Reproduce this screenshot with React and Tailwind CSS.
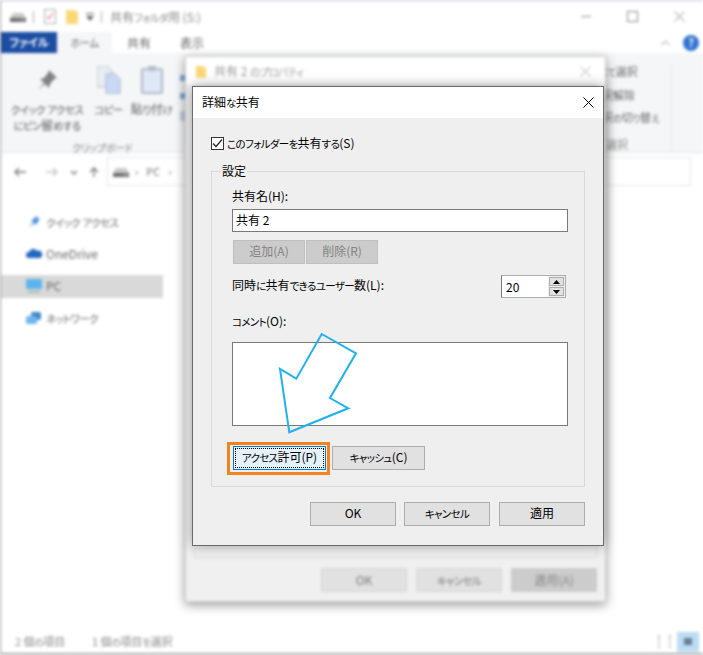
// Advanced sharing dialog over a blurred Explorer window.
const FONT = 'font-["Noto_Sans_CJK_JP","Noto_Sans",sans-serif] [font-feature-settings:"palt"]';

// the UI font in the shot has compressed kana, so kana runs get a smaller size
function Jp({ t }) {
  return t.split(/([\u3040-\u30ff]+)/).map((part, i) =>
    i % 2 === 1
      ? <span key={i} className="text-[0.875em] tracking-[-0.06em]">{part}</span>
      : part
  );
}

function Btn({ t, className = '' }) {
  return (
    <button className={`h-6 pb-[2px] flex items-center justify-center border border-[#adadad] bg-[#e1e1e1] text-xs text-black ${className}`}>
      <span><Jp t={t} /></span>
    </button>
  );
}

function DisabledBtn({ t }) {
  return (
    <button className="h-6 pb-[2px] w-[72px] flex items-center justify-center border border-[#bfbfbf] bg-[#cccccc] text-xs text-[#838383]">
      {t}
    </button>
  );
}

function DriveIcon() {
  return (
    <svg width="16" height="10" viewBox="0 0 16 10">
      <path d="M3 1h10l3 5v4H0V6z" fill="#c9c9c9" />
      <rect x="0" y="6" width="16" height="4" fill="#6d6d6d" />
      <rect x="11" y="7" width="3" height="1.5" fill="#8fc98f" />
    </svg>
  );
}

function FolderIcon({ w = 12, h = 15 }) {
  return (
    <svg width={w} height={h} viewBox="0 0 12 15">
      <path d="M0 1h7l5 2v12H0z" fill="#fad776" />
    </svg>
  );
}

function Close({ color = '#000', size = 11 }) {
  return (
    <svg width={size} height={size} viewBox="0 0 11 11" stroke={color} strokeWidth="1" fill="none">
      <path d="M.5.5l10 10M10.5.5l-10 10" />
    </svg>
  );
}

function RibbonItem({ icon, lines, className = '' }) {
  return (
    <div className={`flex flex-col items-center ${className}`}>
      <div className="h-[32px] flex items-center justify-center">{icon}</div>
      <div className="mt-[5px] text-center text-xs leading-[15px] text-[#555]">
        {lines.map((l) => <div key={l} className="whitespace-nowrap"><Jp t={l} /></div>)}
      </div>
    </div>
  );
}

function NavItem({ icon, label, active }) {
  return (
    <div className={`h-[23px] w-[162px] flex items-center gap-[4px] pl-[25px] pb-[2px] text-xs text-[#666] ${active ? 'bg-[#d9d9d9]' : ''}`}>
      <div className="w-4 flex justify-center">{icon}</div>
      <span><Jp t={label} /></span>
    </div>
  );
}

function Explorer() {
  return (
    <div className="h-full flex flex-col border-t border-l border-b-2 border-t-[#b8b8cc] border-l-[#8a8a8a] border-b-[#a8a8a8] bg-white">
      {/* title bar */}
      <div className="h-[31px] shrink-0 flex items-center pl-[9px] pr-[18px] text-xs text-[#888]">
        <DriveIcon />
        <div className="ml-[7px] w-px h-3 bg-[#aaa]" />
        <svg className="ml-[10px]" width="12" height="15" viewBox="0 0 12 15">
          <rect x=".5" y=".5" width="11" height="14" fill="#fff" stroke="#aaa" />
          <path d="M3 7l2 3 4-6" stroke="#d9534f" fill="none" />
        </svg>
        <div className="ml-[10px]"><FolderIcon /></div>
        <svg className="ml-[8px]" width="8" height="8" viewBox="0 0 8 8" fill="#666">
          <path d="M0 0h8v1H0zM0 3h8L4 8z" />
        </svg>
        <div className="ml-[7px] w-px h-3 bg-[#aaa]" />
        <span className="ml-[8px]"><Jp t="共有フォルダ用 (S:)" /></span>
        <div className="ml-auto flex items-center gap-[36px]">
          <div className="w-[10px] h-px bg-[#888]" />
          <div className="w-[11px] h-[11px] border border-[#888]" />
          <Close color="#888" />
        </div>
      </div>
      {/* tabs */}
      <div className="h-[21px] shrink-0 flex items-center text-xs text-[#666]">
        <div className="w-[56px] h-full flex items-center justify-center bg-[#1b4da3] text-white font-bold text-[11px]">ファイル</div>
        <div className="w-[55px] h-full flex items-center justify-center bg-[#f5f6f7]"><Jp t="ホーム" /></div>
        <div className="w-[54px] text-center">共有</div>
        <div className="w-[52px] text-center">表示</div>
        <div className="ml-auto mr-[4px] flex items-center gap-[13px]">
          <svg width="9" height="6" viewBox="0 0 9 6" fill="none" stroke="#888"><path d="M.5 5l4-4 4 4" /></svg>
          <div className="w-4 h-4 rounded-full bg-[#2f73cf] text-white text-[11px] font-bold flex items-center justify-center">?</div>
        </div>
      </div>
      {/* ribbon */}
      <div className="h-[100px] shrink-0 flex bg-[#f5f6f7] border-b border-[#e4e4e4] pt-[11px]">
        <div className="ml-[8px] flex flex-col">
          <div className="flex">
            <RibbonItem
              className="w-[76px]"
              lines={['クイック アクセス', 'にピン留めする']}
              icon={
                <svg width="22" height="22" viewBox="0 0 22 22" fill="#7d8287">
                  <path d="M13 1l8 8-3 1-4 5-1 4-4-4-7 6 6-7-4-4 4-1 4-5z" />
                </svg>
              }
            />
            <RibbonItem
              className="w-[27px] ml-[10px]"
              lines={['コピー']}
              icon={
                <svg width="24" height="28" viewBox="0 0 24 28">
                  <path d="M0 0h10l5 5v16H0z" fill="#e8edf4" stroke="#b5bcc6" />
                  <path d="M9 8h9l5 5v15H9z" fill="#c9d8f5" stroke="#aab6cc" />
                </svg>
              }
            />
            <RibbonItem
              className="w-[41px] ml-[9px]"
              lines={['貼り付け']}
              icon={
                <svg width="22" height="28" viewBox="0 0 22 28">
                  <rect x="1" y="3" width="20" height="24" rx="1" fill="#dfe8f6" stroke="#9aa7b8" strokeWidth="1.5" />
                  <rect x="7" y="0" width="8" height="5" fill="#b7bec8" />
                </svg>
              }
            />
            <div className="ml-[8px] mt-[11px] flex flex-col gap-[12px]">
              <div className="w-[6px] h-[6px] bg-[#7ba7d8]" />
              <div className="w-[6px] h-[6px] bg-[#7ba7d8]" />
              <div className="w-[6px] h-[10px] bg-[#c5d0df]" />
            </div>
          </div>
          <div className="mt-[6px] pl-[63px] text-xs leading-[16px] text-[#888]"><Jp t="クリップボード" /></div>
        </div>
        <div className="ml-auto w-[81px] flex flex-col border-r border-[#e2e3e4] mr-[31px] text-[11px] text-[#666] leading-[15px]">
          <div className="whitespace-nowrap"><Jp t="すべて選択" /></div>
          <div className="mt-[8px] whitespace-nowrap"><Jp t="選択解除" /></div>
          <div className="mt-[7px] whitespace-nowrap"><Jp t="選択の切り替え" /></div>
          <div className="mt-[11px] pl-[15px] whitespace-nowrap text-[#888]">選択</div>
        </div>
      </div>
      {/* address row */}
      <div className="h-[37px] shrink-0 flex items-center">
        <div className="w-[106px] flex items-center pl-[13px] text-[#777]">
          <svg width="92" height="12" viewBox="0 0 92 12" fill="none" stroke="#777" strokeWidth="1.4">
            <path d="M12 6H1M5 2L1 6l4 4" />
            <path d="M32 6h11M39 2l4 4-4 4" stroke="#c4c4c4" />
            <path d="M57 5l3 3 3-3" />
            <path d="M80 11V2M76 6l4-4 4 4" />
          </svg>
        </div>
        <div className="flex-1 mr-[12px] h-[29px] flex items-center gap-[6px] border border-[#e3e3e3] pl-[5px] text-[11px] text-[#777]">
          <DriveIcon />
          <span>›</span>
          <span className="ml-[2px]">PC</span>
          <span className="ml-[2px]">›</span>
        </div>
      </div>
      {/* nav pane */}
      <div className="flex-1 flex flex-col pt-[21px]">
        <div className="flex flex-col gap-[9px]">
          <NavItem
            label="クイック アクセス"
            icon={<svg width="12" height="12" viewBox="0 0 12 12" fill="#4a90d9"><path d="M8 0l4 4-2 1-2 4-2-2-5 5 4-6-2-2 3-1z" /></svg>}
          />
          <NavItem
            label="OneDrive"
            icon={<svg width="16" height="9" viewBox="0 0 16 9" fill="#1f66c1"><path d="M3 9a3 3 0 0 1 0-6 4.500 4.500 0 0 1 8-1 3.500 3.500 0 0 1 3 7z" /></svg>}
          />
          <NavItem
            active
            label="PC"
            icon={<svg width="16" height="14" viewBox="0 0 16 14"><rect width="16" height="10" fill="#5cb4ee" /><rect x="2" y="12" width="12" height="1.500" fill="#9aa" /></svg>}
          />
          <NavItem
            label="ネットワーク"
            icon={<svg width="16" height="14" viewBox="0 0 16 14"><rect x="5" y="1" width="10" height="8" rx="2" fill="#3d86c6" /><rect x="0" y="5" width="11" height="8" rx="2" fill="#6cb6ee" /></svg>}
          />
        </div>
        {/* status bar */}
        <div className="mt-auto mb-[1px] h-[21px] flex items-center pl-[14px] pr-[4px] text-[11px] text-[#888]">
          <span className="w-[77px]"><Jp t="2 個の項目" /></span>
          <span><Jp t="1 個の項目を選択" /></span>
          <div className="ml-auto flex items-center gap-[6px]">
            <div className="w-[13px] h-[13px] border-x-2 border-dotted border-[#bbb]" />
            <div className="w-[22px] h-[20px] flex items-center justify-center bg-[#bcdcf4]">
              <div className="w-[8px] h-[7px] bg-[#6b7f8f]" />
            </div>
          </div>
        </div>
      </div>
    </div>
  );
}

function BackBtn({ t, className = 'bg-[#e1e1e1] border border-[#d4d4d4] text-[#777]' }) {
  return (
    <button className={`w-[86px] h-6 flex items-center justify-center text-xs ${className}`}>
      <span><Jp t={t} /></span>
    </button>
  );
}

function PropertiesDialog() {
  return (
    <div className="absolute left-[185px] top-[56px] w-[421px] h-[546px] flex flex-col border border-[#cfcfcf] shadow-[0_3px_10px_rgba(0,0,0,0.4)]">
      <div className="h-[28px] shrink-0 flex items-center gap-[8px] bg-white pl-[10px] pr-[14px] text-xs text-[#999]">
        <FolderIcon w={10} h={13} />
        <span><Jp t="共有 2 のプロパティ" /></span>
        <div className="ml-auto"><Close color="#aaa" /></div>
      </div>
      <div className="flex-1 flex flex-col bg-[#f0f0f0] px-[8px]">
        <div className="flex-1 border border-[#dcdcdc]" />
        <div className="h-[43px] shrink-0 flex items-center justify-end gap-[9px]">
          <BackBtn t="OK" />
          <BackBtn t="キャンセル" />
          <BackBtn t="適用(A)" className="bg-[#cccccc] text-[#888]" />
        </div>
      </div>
    </div>
  );
}

function SpinBox() {
  return (
    <div className="mr-[2px] h-[23px] w-[65px] flex border border-[#adadad] border-l-[#7a7a7a] bg-white">
      <div className="flex-1 flex items-center pl-[4px] text-xs">20</div>
      <div className="w-[17px] flex flex-col justify-between bg-[#f0f0f0] p-px">
        <div className="h-[9px] flex items-center justify-center border border-[#adadad] bg-[#e1e1e1]">
          <svg width="7" height="4" viewBox="0 0 7 4"><path d="M3.500 0L7 4H0z" /></svg>
        </div>
        <div className="h-[9px] flex items-center justify-center border border-[#adadad] bg-[#e1e1e1]">
          <svg width="7" height="4" viewBox="0 0 7 4"><path d="M0 0h7L3.500 4z" /></svg>
        </div>
      </div>
    </div>
  );
}

function SharingDialog() {
  return (
    <div className="absolute left-[192px] top-[86px] w-[412px] h-[460px] flex flex-col border border-[#6a6a6a] bg-[#efefef] text-xs text-black shadow-[0_0_12px_rgba(0,0,0,0.35)]">
      <div className="h-[31px] shrink-0 flex items-center justify-between bg-white pl-[9px] pr-[9px]">
        <span className="text-xs pb-[2px]"><Jp t="詳細な共有" /></span>
        <Close />
      </div>
      <div className="flex-1 flex flex-col pl-[18px] pr-[18px] pt-[19px]">
        <label className="h-[13px] flex items-center gap-[3px]">
          <span className="w-[13px] h-[13px] flex items-center justify-center border border-[#333] bg-white">
            <svg width="11" height="9" viewBox="0 0 11 9" fill="none" stroke="#222" strokeWidth="1.200"><path d="M1 4.500l3 3 6-7" /></svg>
          </span>
          <span className="whitespace-nowrap pb-[2px]"><Jp t="このフォルダーを共有する(S)" /></span>
        </label>
        <div className="relative mt-[21px] border border-[#d9d9d9] pl-[20px] pr-[16px] pt-[16px] pb-[16px]">
          <span className="absolute left-[9px] -top-[9px] bg-[#efefef] px-[1px] leading-[16px]">設定</span>
          <div className="h-[16px] leading-[15px]">共有名(H):</div>
          <div className="mt-[5px] h-[23px] pb-[2px] flex items-center border border-[#7a7a7a] bg-white pl-[3px]">共有 2</div>
          <div className="mt-[8px] ml-px flex gap-px">
            <DisabledBtn t="追加(A)" />
            <DisabledBtn t="削除(R)" />
          </div>
          <div className="mt-[11px] flex items-center justify-between">
            <span className="pb-[3px]"><Jp t="同時に共有できるユーザー数(L):" /></span>
            <SpinBox />
          </div>
          <div className="mt-[16px] h-[16px] leading-[14px]"><Jp t="コメント(O):" /></div>
          <div className="mt-[12px] h-[84px] border border-[#7a7a7a] bg-white" />
          <div className="mt-[20px] ml-px flex gap-[6px]">
            <button className="w-[93px] h-6 p-px border border-[#0078d7] bg-[#e5f1fb] text-xs">
              <span className="h-full pb-[2px] flex items-center justify-center border border-dotted border-black">
                <span><Jp t="アクセス許可(P)" /></span>
              </span>
            </button>
            <Btn className="w-[93px]" t="キャッシュ(C)" />
          </div>
        </div>
        <div className="mt-[15px] flex justify-end gap-[8px]">
          <Btn className="w-[86px]" t="OK" />
          <Btn className="w-[86px]" t="キャンセル" />
          <Btn className="w-[86px] ml-px" t="適用" />
        </div>
      </div>
    </div>
  );
}

export default function App() {
  return (
    <div className={`relative w-[703px] h-[655px] overflow-hidden bg-white ${FONT}`}>
      <div className="absolute inset-0 blur-[1.6px]">
        <Explorer />
        <PropertiesDialog />
      </div>
      <SharingDialog />
      {/* orange annotation around the permissions button */}
      <div className="absolute left-[227px] top-[442px] w-[103px] h-[33px] border-[3px] border-[#f58220]" />
      {/* hand drawn arrow */}
      <svg className="absolute left-[275px] top-[330px]" width="90" height="108" viewBox="275 330 90 108" fill="none" stroke="#1fb1f0" strokeWidth="2">
        <path d="M321.700 334L356 353.300L330 398L348.300 408.300L289.300 432.300L280 369L296.300 378.700Z" />
      </svg>
    </div>
  );
}
